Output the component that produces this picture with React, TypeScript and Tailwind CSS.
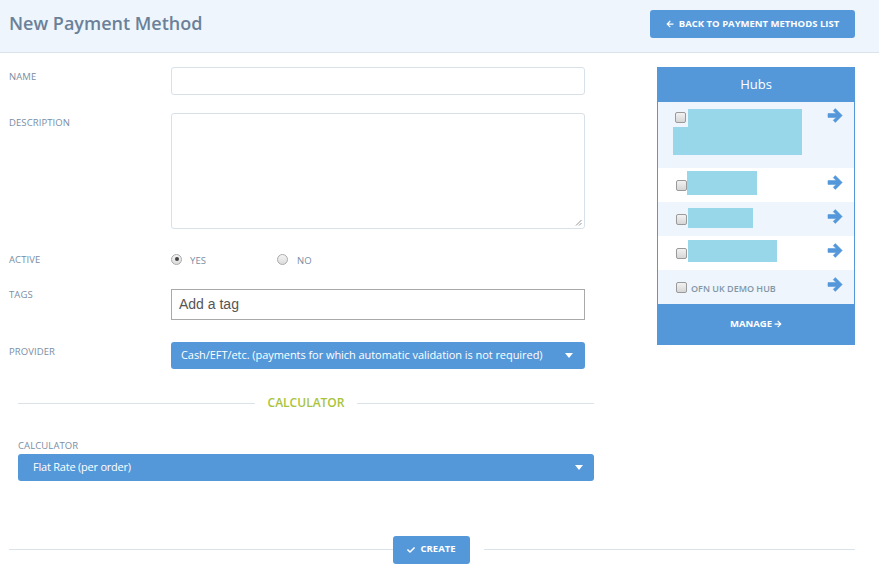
import { FaArrowLeft, FaArrowRight, FaCheck } from "react-icons/fa";

const font = { fontFamily: '"Open Sans", "Liberation Sans", sans-serif' };

function Radio({ checked }: { checked?: boolean }) {
  return (
    <span className="flex h-[11px] w-[11px] items-center justify-center rounded-full border border-[#a9a9a9] bg-gradient-to-b from-[#f4f4f4] to-[#dcdcdc]">
      {checked && <span className="h-[4px] w-[4px] rounded-full bg-[#444]" />}
    </span>
  );
}

function Checkbox() {
  return (
    <span className="block h-[11px] w-[11px] shrink-0 rounded-[2px] border border-[#9a9a9a] bg-gradient-to-b from-[#f2f2f2] to-[#d6d6d6]" />
  );
}

function Caret() {
  return (
    <svg width="8" height="5" viewBox="0 0 8 5" className="shrink-0">
      <path d="M0 0h8L4 5z" fill="#fff" />
    </svg>
  );
}

function Label({ children }: { children: React.ReactNode }) {
  return (
    <span className="block text-[9.5px] uppercase leading-none tracking-[0.01em] text-[#7a8ea3]">
      {children}
    </span>
  );
}

function HubArrow() {
  return (
    <svg width="16" height="15" viewBox="0 0 16 15" className="shrink-0">
      <path
        d="M1 5.6h8.2L6.3 2.7 8.3 0.6l6.9 6.9-6.9 6.9-2-2.1 2.9-2.9H1z"
        fill="#5498da"
        stroke="#5498da"
        strokeWidth="0.6"
        strokeLinejoin="round"
      />
    </svg>
  );
}

export default function App() {
  return (
    <div style={font} className="h-[573px] w-[879px] overflow-hidden bg-white">
      {/* header */}
      <div className="flex h-[53px] items-start justify-between border-b border-[#dbe3ea] bg-[#eef5fc] pl-[9px] pr-[24px]">
        <h1 className="mt-[10px] text-[18px] font-semibold text-[#6a8199]">
          New Payment Method
        </h1>
        <button className="mt-[10px] flex h-[28px] w-[205px] items-center justify-center gap-[5px] rounded-[3px] bg-[#5498da] text-[9.5px] font-bold uppercase text-white">
          <FaArrowLeft className="h-[8px] w-[8px]" />
          Back to payment methods list
        </button>
      </div>

      <div className="flex">
        {/* form */}
        <div className="w-[594px] pl-[9px]">
          <div className="mt-[14px] flex">
            <div className="w-[162px] pt-[5px]">
              <Label>Name</Label>
            </div>
            <div className="h-[28px] w-[414px] rounded-[3px] border border-[#d8e0e8] bg-white" />
          </div>

          <div className="mt-[18px] flex">
            <div className="w-[162px] pt-[5px]">
              <Label>Description</Label>
            </div>
            <div className="relative h-[116px] w-[414px] rounded-[3px] border border-[#d8e0e8] bg-white">
              <svg width="7" height="7" viewBox="0 0 7 7" className="absolute bottom-[2px] right-[2px]">
                <path d="M6.5 1L1 6.5M6.5 4L4 6.5" stroke="#888" strokeWidth="0.9" />
              </svg>
            </div>
          </div>

          <div className="mt-[21px] flex h-[18px] items-center">
            <div className="w-[162px] pt-[2px]">
              <Label>Active</Label>
            </div>
            <div className="flex items-center">
              <Radio checked />
              <span className="ml-[8px] pt-[3px]">
                <Label>Yes</Label>
              </span>
              <span className="ml-[71px]">
                <Radio />
              </span>
              <span className="ml-[9px] pt-[3px]">
                <Label>No</Label>
              </span>
            </div>
          </div>

          <div className="mt-[21px] flex">
            <div className="w-[162px] pt-[1px]">
              <Label>Tags</Label>
            </div>
            <div className="flex h-[31px] w-[414px] items-center border border-[#a9a9a9] bg-white px-[7px]">
              <span style={{ fontFamily: '"Liberation Sans", Arial, sans-serif' }} className="text-[14px] text-[#555]">
                Add a tag
              </span>
            </div>
          </div>

          <div className="mt-[22px] flex">
            <div className="w-[162px] pt-[5px]">
              <Label>Provider</Label>
            </div>
            <div className="flex h-[27px] w-[414px] items-center justify-between rounded-[3px] bg-[#5498da] pl-[10px] pr-[12px]">
              <span className="text-[11px] tracking-[-0.005em] text-white">
                Cash/EFT/etc. (payments for which automatic validation is not required)
              </span>
              <Caret />
            </div>
          </div>

          {/* calculator section */}
          <div className="mt-[25px] flex items-center pl-[9px]">
            <div className="h-px flex-1 bg-[#dbe3ea]" />
            <span className="px-[13px] text-[12px] font-semibold text-[#a7c43c]">CALCULATOR</span>
            <div className="h-px flex-1 bg-[#dbe3ea]" />
          </div>

          <div className="mt-[29px] pl-[9px]">
            <Label>Calculator</Label>
          </div>
          <div className="ml-[9px] mt-[3px] flex h-[27px] items-center justify-between rounded-[3px] bg-[#5498da] pl-[15px] pr-[11px]">
            <span className="text-[11px] tracking-[-0.02em] text-white">Flat Rate (per order)</span>
            <Caret />
          </div>
        </div>

        {/* hubs */}
        <div className="ml-[63px] mt-[14px] w-[198px] self-start border border-[#5498da]">
          <div className="flex h-[34px] items-center justify-center bg-[#5498da] text-[13px] text-white">
            Hubs
          </div>
          <div className="relative flex h-[66px] items-start justify-between bg-[#eef5fc] pl-[17px] pr-[11px] pt-[6px]">
            <div className="mt-[4px]">
              <Checkbox />
            </div>
            <div className="absolute left-[30px] top-[7px] h-[46px] w-[114px] bg-[#98d6e9]" />
            <div className="absolute left-[15px] top-[25px] h-[28px] w-[16px] bg-[#98d6e9]" />
            <HubArrow />
          </div>
          <div className="relative flex h-[34px] items-center justify-between bg-white pl-[18px] pr-[11px]">
            <Checkbox />
            <div className="absolute left-[29px] top-[3px] h-[24px] w-[70px] bg-[#98d6e9]" />
            <div className="-mt-[6px]">
              <HubArrow />
            </div>
          </div>
          <div className="relative flex h-[34px] items-center justify-between bg-[#eef5fc] pl-[18px] pr-[11px]">
            <Checkbox />
            <div className="absolute left-[30px] top-[6px] h-[20px] w-[65px] bg-[#98d6e9]" />
            <div className="-mt-[6px]">
              <HubArrow />
            </div>
          </div>
          <div className="relative flex h-[34px] items-center justify-between bg-white pl-[18px] pr-[11px]">
            <Checkbox />
            <div className="absolute left-[30px] top-[4px] h-[22px] w-[89px] bg-[#98d6e9]" />
            <div className="-mt-[6px]">
              <HubArrow />
            </div>
          </div>
          <div className="flex h-[34px] items-center justify-between bg-[#eef5fc] pl-[18px] pr-[11px]">
            <div className="flex items-center gap-[4px]">
              <Checkbox />
              <span className="pt-[4px] text-[9px] font-semibold text-[#8296a8]">OFN UK DEMO HUB</span>
            </div>
            <div className="-mt-[6px]">
              <HubArrow />
            </div>
          </div>
          <div className="flex h-[40px] items-center justify-center gap-[2px] bg-[#5498da] text-[9.5px] font-bold text-white">
            MANAGE
            <FaArrowRight className="h-[8px] w-[8px]" />
          </div>
        </div>
      </div>

      {/* footer */}
      <div className="mt-[55px] flex items-center pl-[9px] pr-[24px]">
        <div className="h-px flex-1 bg-[#dbe3ea]" />
        <button className="flex h-[28px] w-[77px] items-center justify-center gap-[5px] rounded-[3px] bg-[#5498da] text-[9.5px] font-bold text-white">
          <FaCheck className="h-[8px] w-[8px]" />
          CREATE
        </button>
        <div className="ml-[14px] h-px w-[371px] bg-[#dbe3ea]" />
      </div>
    </div>
  );
}
